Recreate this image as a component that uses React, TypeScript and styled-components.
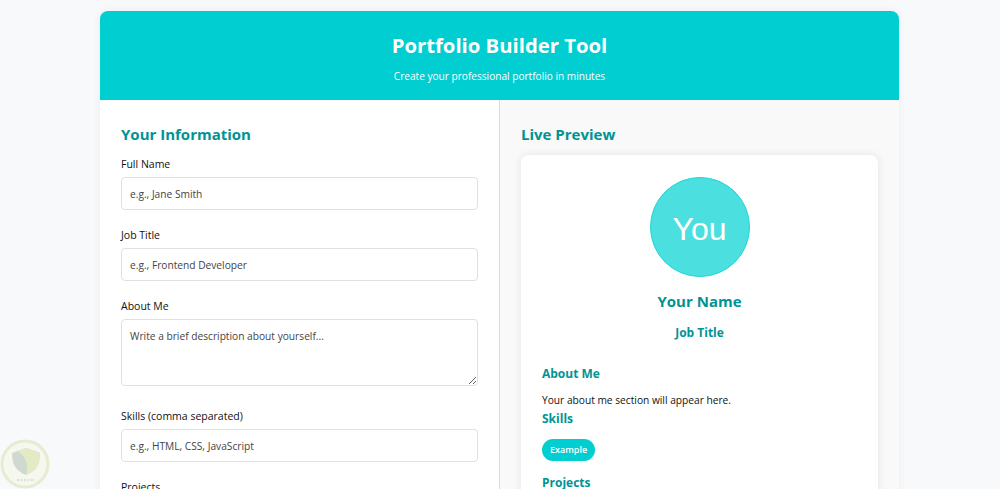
import React from 'react';
import styled, { createGlobalStyle } from 'styled-components';

const GlobalStyle = createGlobalStyle`
  html, body {
    margin: 0;
    height: 100%;
    overflow: hidden;
    background: #f8f9fa;
  }
  * {
    box-sizing: border-box;
  }
  body {
    font-family: 'Open Sans', 'Noto Sans', sans-serif;
    color: #000;
  }
`;

const Page = styled.div`
  width: 799px;
  margin: 11px 0 0 100px;
  background: #fff;
  border-radius: 8px 8px 0 0;
  box-shadow: 0 0 8px rgba(0, 0, 0, 0.06);
`;

const Header = styled.header`
  height: 89px;
  padding-top: 20px;
  background: #00ced1;
  border-radius: 8px 8px 0 0;
  color: #fff;
  text-align: center;
`;

const Title = styled.h1`
  margin: 0;
  font-size: 20.3px;
  line-height: 28px;
  font-weight: 700;
`;

const Subtitle = styled.p`
  margin: 10px 0 0;
  font-size: 10.1px;
  line-height: 15px;
`;

const Columns = styled.div`
  display: grid;
  grid-template-columns: 400px 399px;
  height: 500px;
`;

const FormPanel = styled.section`
  padding: 23px 21px 0;
  border-right: 1px solid #dcdcdc;
`;

const PreviewPanel = styled.section`
  padding: 23px 21px 0;
  background: #f9f9f9;
`;

const SectionTitle = styled.h2<{ $gap: number }>`
  margin: 0 0 ${({ $gap }) => $gap}px;
  font-size: 15px;
  line-height: 22px;
  font-weight: 700;
  color: #009393;
`;

const Field = styled.div<{ $gap?: number }>`
  margin-bottom: ${({ $gap = 18 }) => $gap}px;
`;

const Label = styled.label`
  display: block;
  margin-bottom: 5px;
  font-size: 10.5px;
  line-height: 15px;
  font-weight: 500;
  color: #111;
`;

const Input = styled.input`
  display: block;
  width: 100%;
  height: 33px;
  padding: 0 8px;
  border: 1px solid #e0e0e0;
  border-radius: 4px;
  background: #fff;
  font-family: inherit;
  font-size: 10.2px;
  outline: none;

  &::placeholder {
    color: #444;
    opacity: 1;
  }
`;

const TextArea = styled.textarea`
  display: block;
  width: 100%;
  height: 67px;
  padding: 9px 8px;
  border: 1px solid #e0e0e0;
  border-radius: 4px;
  background: #fff;
  font-family: inherit;
  font-size: 10.2px;
  line-height: 15px;
  outline: none;

  &::placeholder {
    color: #444;
    opacity: 1;
  }
`;

const Card = styled.div`
  height: 480px;
  padding: 22px 21px 0;
  background: #fff;
  border-radius: 8px;
  box-shadow: 0 0 8px rgba(0, 0, 0, 0.09);
`;

const Avatar = styled.div`
  display: flex;
  align-items: center;
  justify-content: center;
  width: 100px;
  height: 100px;
  margin: 0 auto;
  padding-top: 4px;
  border: 1px solid #20d4d6;
  border-radius: 50%;
  background: #4cdfe0;
  color: #fff;
  font-family: 'Liberation Sans', Arial, sans-serif;
  font-size: 32px;
`;

const Name = styled.h3`
  margin: 13px 0 0;
  font-size: 15px;
  line-height: 22px;
  font-weight: 700;
  text-align: center;
  color: #009393;
`;

const JobTitle = styled.h4`
  margin: 12px 0 0;
  font-size: 12px;
  line-height: 18px;
  font-weight: 700;
  text-align: center;
  color: #009393;
`;

const PreviewHeading = styled.h4<{ $top: number }>`
  margin: ${({ $top }) => $top}px 0 0;
  font-size: 12px;
  line-height: 18px;
  font-weight: 700;
  color: #009393;
`;

const AboutText = styled.p`
  margin: 10px 0 0;
  font-size: 10.2px;
  line-height: 15px;
  color: #111;
`;

const SkillTag = styled.span`
  display: inline-block;
  margin-top: 11px;
  padding: 0 8px;
  height: 22px;
  border-radius: 11px;
  background: #00ced1;
  color: #fff;
  font-size: 9px;
  line-height: 22px;
  font-weight: 600;
`;

const Watermark = styled.svg`
  position: fixed;
  left: 0;
  bottom: 0;
  width: 50px;
  height: 50px;
`;

const App = () => (
  <>
    <GlobalStyle />
    <Page>
      <Header>
        <Title>Portfolio Builder Tool</Title>
        <Subtitle>Create your professional portfolio in minutes</Subtitle>
      </Header>
      <Columns>
        <FormPanel>
          <SectionTitle $gap={12}>Your Information</SectionTitle>
          <Field>
            <Label>Full Name</Label>
            <Input placeholder="e.g., Jane Smith" />
          </Field>
          <Field>
            <Label>Job Title</Label>
            <Input placeholder="e.g., Frontend Developer" />
          </Field>
          <Field $gap={23}>
            <Label>About Me</Label>
            <TextArea placeholder="Write a brief description about yourself..." />
          </Field>
          <Field>
            <Label>Skills (comma separated)</Label>
            <Input placeholder="e.g., HTML, CSS, JavaScript" />
          </Field>
          <Field>
            <Label>Projects</Label>
          </Field>
        </FormPanel>
        <PreviewPanel>
          <SectionTitle $gap={10}>Live Preview</SectionTitle>
          <Card>
            <Avatar>You</Avatar>
            <Name>Your Name</Name>
            <JobTitle>Job Title</JobTitle>
            <PreviewHeading $top={23}>About Me</PreviewHeading>
            <AboutText>Your about me section will appear here.</AboutText>
            <PreviewHeading $top={2}>Skills</PreviewHeading>
            <SkillTag>Example</SkillTag>
            <PreviewHeading $top={13}>Projects</PreviewHeading>
          </Card>
        </PreviewPanel>
      </Columns>
    </Page>
    <Watermark viewBox="0 0 50 50">
      <circle cx="25" cy="25" r="23" fill="#f6f8ef" stroke="#e4ecd2" strokeWidth="3" />
      <path d="M26 9 L40 14 C40 26 36 32 26 36 C16 32 12 26 12 14 Z" fill="#cfd9cf" />
      <path d="M26 9 L40 14 C40 26 36 32 26 36 C29 28 27 19 18 12 Z" fill="#e3eac4" />
      <path d="M17 41 H35" stroke="#dbe0d2" strokeWidth="2" strokeDasharray="2 1.5" />
    </Watermark>
  </>
);

export default App;
